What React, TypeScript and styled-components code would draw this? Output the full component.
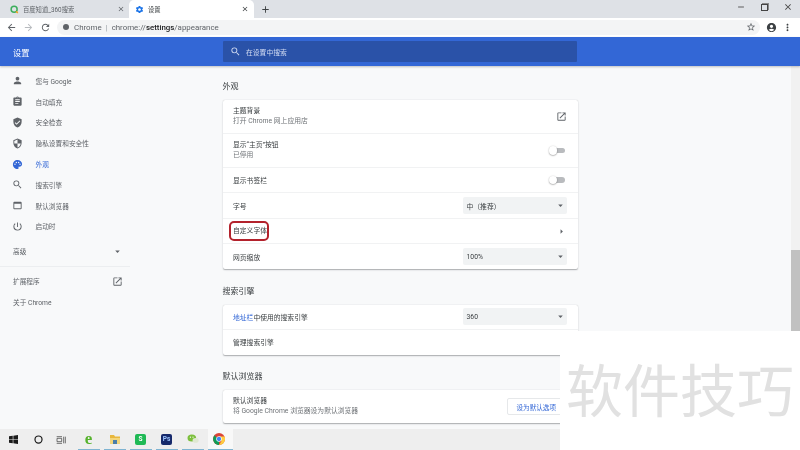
import styled, { createGlobalStyle } from 'styled-components';
import {
  MdArrowDropDown,
  MdAssignment,
  MdMoreVert,
  MdOpenInNew,
  MdPalette,
  MdPerson,
  MdPowerSettingsNew,
  MdSearch,
  MdSecurity,
  MdSettings,
  MdVerifiedUser,
  MdWebAsset,
  MdArrowBack,
  MdArrowForward,
  MdRefresh,
  MdStarBorder,
  MdAccountCircle,
  MdClose,
  MdAdd,
  MdRemove,
  MdArrowRight,
} from 'react-icons/md';

const GlobalStyle = createGlobalStyle`
  html, body {
    margin: 0;
    padding: 0;
    background: #fff;
  }
  body {
    font-family: Roboto, "Noto Sans CJK SC", sans-serif;
  }
`;

const Window = styled.div`
  position: relative;
  width: 800px;
  height: 450px;
  overflow: hidden;
  display: flex;
  flex-direction: column;
  background: #f8f9fa;
  filter: blur(0.35px);
`;

const TabStrip = styled.div`
  height: 18px;
  display: flex;
  align-items: stretch;
  background: #dee1e6;
  flex: none;
`;

const Tab = styled.div<{ $active?: boolean }>`
  width: 125px;
  display: flex;
  align-items: center;
  gap: 4px;
  padding: ${(p) => (p.$active ? '0 5px 0 6px' : '0 0 0 10px')};
  box-sizing: border-box;
  font-size: 6.3px;
  color: ${(p) => (p.$active ? '#3c4043' : '#5f6368')};
  background: ${(p) => (p.$active ? '#fff' : 'transparent')};
  border-radius: 5px 5px 0 0;
  margin-left: ${(p) => (p.$active ? '4px' : '0')};
`;

const TabTitle = styled.span`
  flex: 1;
  white-space: nowrap;
`;

const NewTab = styled.div`
  display: flex;
  align-items: center;
  margin-left: 6px;
  color: #3c4043;
  font-size: 11px;
`;

const WindowControls = styled.div`
  margin-left: auto;
  display: flex;
  align-items: center;
  gap: 14px;
  padding: 0 7px 4px 0;
  color: #444;
  font-size: 10px;
`;

const MaxIcon = styled.span`
  width: 5px;
  height: 5px;
  border: 1px solid #444;
  box-sizing: content-box;
  margin: 0 1px;
  box-shadow: 1px -1px 0 0 #888;
`;

const Toolbar = styled.div`
  height: 19px;
  flex: none;
  display: flex;
  align-items: center;
  background: #fff;
  padding: 0 6px 1px 6px;
  box-sizing: border-box;
  color: #5f6368;
  font-size: 11px;
`;

const NavIcons = styled.div`
  display: flex;
  gap: 6px;
  align-items: center;
  width: 51px;
  flex: none;
`;

const Omnibox = styled.div`
  width: 703px;
  height: 15px;
  flex: none;
  border-radius: 8px;
  background: #f3f4f5;
  display: flex;
  align-items: center;
  padding: 0 4px 0 6px;
  box-sizing: border-box;
  font-size: 7.9px;
  color: #5f6368;
  gap: 3px;
`;

const SecureDot = styled.span`
  width: 6px;
  height: 6px;
  border-radius: 50%;
  background: #5f6368;
  margin-right: 2px;
`;

const Pipe = styled.span`
  color: #9aa0a6;
  margin: 0 1px;
`;

const UrlHost = styled.b`
  color: #202124;
  font-weight: 500;
`;

const Url = styled.span`
  white-space: nowrap;
`;

const StarSlot = styled.span`
  margin-left: auto;
  display: flex;
  color: #5f6368;
  font-size: 10px;
`;

const ProfileIcons = styled.div`
  display: flex;
  align-items: center;
  gap: 5px;
  margin-left: 6px;
  color: #3c4043;
  font-size: 11px;
`;

const HeaderBar = styled.div`
  height: 29px;
  flex: none;
  display: flex;
  align-items: center;
  background: #3367d6;
  box-shadow: 0 1px 2px rgba(60, 64, 67, 0.3);
  color: #fff;
  z-index: 1;
`;

const HeaderTitle = styled.div`
  width: 223px;
  padding-left: 13px;
  box-sizing: border-box;
  font-size: 8.2px;
  flex: none;
`;

const SearchBox = styled.div`
  width: 354px;
  height: 21px;
  background: #2a52a8;
  border-radius: 1px;
  display: flex;
  align-items: center;
  padding-left: 7px;
  box-sizing: border-box;
  gap: 5px;
  font-size: 6.8px;
  color: #d2dcf2;
`;

const Body = styled.div`
  flex: 1;
  min-height: 0;
  display: flex;
  overflow: hidden;
`;

const Sidebar = styled.nav`
  width: 222.5px;
  flex: none;
  padding-top: 4.5px;
  box-sizing: border-box;
`;

const NavItem = styled.div<{ $active?: boolean }>`
  height: 20.8px;
  display: flex;
  align-items: center;
  padding-left: 12px;
  gap: 12.5px;
  font-size: 6.7px;
  color: ${(p) => (p.$active ? '#3367d6' : '#5f6368')};
  svg {
    font-size: 11px;
    color: ${(p) => (p.$active ? '#3367d6' : '#5f6368')};
  }
`;

const NavPlain = styled.div`
  width: 130px;
  height: 21px;
  display: flex;
  align-items: center;
  justify-content: space-between;
  padding: 0 7px 0 13px;
  box-sizing: border-box;
  font-size: 6.7px;
  color: #5f6368;
  svg {
    font-size: 11px;
  }
`;

const NavAdvanced = styled(NavPlain)`
  margin-top: 5px;
  height: 25px;
  border-bottom: 1px solid #eceef0;
  padding-bottom: 5px;
  margin-bottom: 4px;
`;

const Main = styled.main`
  width: 355px;
  flex: none;
  padding-top: 14px;
  box-sizing: border-box;
`;

const Section = styled.section`
  & + & {
    margin-top: 15.5px;
  }
`;

const SectionTitle = styled.h2`
  margin: 0 0 6px;
  height: 14px;
  line-height: 14px;
  font-size: 8px;
  font-weight: 400;
  color: #3c4043;
`;

const Card = styled.div`
  background: #fff;
  border-radius: 2px;
  box-shadow: 0 0.5px 1px rgba(60, 64, 67, 0.3), 0 1px 2px rgba(60, 64, 67, 0.15);
`;

const Row = styled.div<{ $height: number; $last?: boolean }>`
  height: ${(p) => p.$height}px;
  display: flex;
  align-items: center;
  justify-content: space-between;
  padding: 0 11px 0 10.5px;
  box-sizing: border-box;
  border-bottom: ${(p) => (p.$last ? 'none' : '1px solid #f1f2f3')};
  font-size: 6.8px;
  color: #3c4043;
`;

const RowText = styled.div`
  display: flex;
  flex-direction: column;
  gap: 1.5px;
  line-height: 9px;
`;

const SubText = styled.span`
  color: #6f7377;
`;

const LinkText = styled.span`
  color: #3367d6;
`;

const Circled = styled.span`
  display: inline-block;
  line-height: 10px;
  padding: 3px 0 3px 2px;
  margin-left: -4px;
  border: 2px solid #b3222c;
  border-radius: 5px;
`;

const Select = styled.div`
  width: 104px;
  height: 17px;
  display: flex;
  align-items: center;
  justify-content: space-between;
  padding: 0 1px 0 4px;
  box-sizing: border-box;
  background: #f1f3f4;
  border-radius: 2px;
  color: #3c4043;
  font-size: 6.8px;
  svg {
    font-size: 11px;
    color: #5f6368;
  }
`;

const Toggle = styled.div`
  position: relative;
  width: 14px;
  height: 5.5px;
  margin-right: 2px;
  border-radius: 3px;
  background: #b9bbbe;
  &::before {
    content: '';
    position: absolute;
    left: -2px;
    top: -1.5px;
    width: 8.5px;
    height: 8.5px;
    border-radius: 50%;
    background: #fff;
    box-shadow: 0 0.5px 1.5px rgba(0, 0, 0, 0.45);
  }
`;

const RowIcon = styled.span`
  display: flex;
  color: #5f6368;
  font-size: 11px;
`;

const OutlineButton = styled.div`
  width: 70px;
  height: 17px;
  display: flex;
  align-items: center;
  padding-left: 9px;
  box-sizing: border-box;
  border: 1px solid #e6e8ea;
  border-radius: 2px;
  color: #3367d6;
  font-size: 6.6px;
  white-space: nowrap;
  margin-right: -10px;
`;

const Scrollbar = styled.div`
  margin-left: auto;
  width: 9px;
  flex: none;
  display: flex;
  flex-direction: column;
  background: #f1f1f1;
  padding-top: 184px;
  box-sizing: border-box;
`;

const ScrollThumb = styled.div`
  flex: 1;
  background: #c1c1c1;
`;

const Taskbar = styled.div`
  height: 21px;
  flex: none;
  display: flex;
  align-items: center;
  background: #eeeeee;
`;

const TaskStart = styled.div`
  width: 26px;
  display: flex;
  justify-content: center;
`;

const TaskCircle = styled.div`
  width: 24px;
  display: flex;
  justify-content: center;
`;

const TaskView = styled.div`
  width: 22px;
  margin-right: 6px;
  display: flex;
  justify-content: center;
`;

const TaskApp = styled.div<{ $open?: boolean }>`
  width: ${(p) => (p.$open ? '25px' : '22px')};
  height: 21px;
  margin-right: 4px;
  padding-right: ${(p) => (p.$open ? '4px' : '1px')};
  display: flex;
  align-items: center;
  justify-content: center;
  box-sizing: border-box;
  border-bottom: 1.5px solid #7fb4d2;
  background: ${(p) => (p.$open ? '#f8f8f8' : 'transparent')};
`;

const AppBadge = styled.span<{ $bg: string; $fg: string }>`
  width: 11px;
  height: 11px;
  border-radius: 2px;
  display: flex;
  align-items: center;
  justify-content: center;
  background: ${(p) => p.$bg};
  color: ${(p) => p.$fg};
  font-size: 6.5px;
  font-weight: 700;
`;

const IeGlyph = styled.span`
  color: #55b22c;
  font-size: 17px;
  line-height: 14px;
  font-weight: 700;
  font-family: "Liberation Serif", serif;
`;

const Watermark = styled.div`
  position: absolute;
  left: 560px;
  top: 331px;
  width: 240px;
  height: 119px;
  background: #fff;
  display: flex;
  align-items: center;
  justify-content: center;
  padding-bottom: 7px;
  box-sizing: border-box;
  font-size: 57px;
  font-weight: 400;
  color: #e1e1e1;
  white-space: nowrap;
`;

function ChromeLogo({ size }: { size: number }) {
  return (
    <svg width={size} height={size} viewBox="0 0 24 24">
      <circle cx="12" cy="12" r="12" fill="#db4437" />
      <path d="M12 24A12 12 0 0 1 3 4.5L7 9l5 3Z" fill="#0f9d58" />
      <path d="M12 24A12 12 0 0 0 23 7H12l5 9Z" fill="#ffcd40" />
      <circle cx="12" cy="12" r="5.5" fill="#fff" />
      <circle cx="12" cy="12" r="4.3" fill="#4285f4" />
    </svg>
  );
}

function SearchFavicon() {
  return (
    <svg width="9" height="9" viewBox="0 0 12 12" fill="none">
      <circle cx="5.5" cy="5.5" r="4" stroke="#3cae5c" strokeWidth="2" />
      <path d="M8 8.5 10.5 10.5" stroke="#f0a020" strokeWidth="2" />
    </svg>
  );
}

export default function App() {
  return (
    <>
      <GlobalStyle />
      <Window>
        <TabStrip>
          <Tab>
            <SearchFavicon />
            <TabTitle>百度知道_360搜索</TabTitle>
            <MdClose size={8} />
          </Tab>
          <Tab $active>
            <MdSettings size={9} color="#1a73e8" />
            <TabTitle>设置</TabTitle>
            <MdClose size={8} />
          </Tab>
          <NewTab>
            <MdAdd />
          </NewTab>
          <WindowControls>
            <MdRemove />
            <MaxIcon />
            <MdClose />
          </WindowControls>
        </TabStrip>

        <Toolbar>
          <NavIcons>
            <MdArrowBack />
            <MdArrowForward color="#b8bbbf" />
            <MdRefresh />
          </NavIcons>
          <Omnibox>
            <SecureDot />
            Chrome
            <Pipe>|</Pipe>
            <Url>
              chrome://<UrlHost>settings</UrlHost>/appearance
            </Url>
            <StarSlot>
              <MdStarBorder />
            </StarSlot>
          </Omnibox>
          <ProfileIcons>
            <MdAccountCircle />
            <MdMoreVert />
          </ProfileIcons>
        </Toolbar>

        <HeaderBar>
          <HeaderTitle>设置</HeaderTitle>
          <SearchBox>
            <MdSearch size={11} />
            在设置中搜索
          </SearchBox>
        </HeaderBar>

        <Body>
          <Sidebar>
            <NavItem><MdPerson />您与 Google</NavItem>
            <NavItem><MdAssignment />自动填充</NavItem>
            <NavItem><MdVerifiedUser />安全检查</NavItem>
            <NavItem><MdSecurity />隐私设置和安全性</NavItem>
            <NavItem $active><MdPalette />外观</NavItem>
            <NavItem><MdSearch />搜索引擎</NavItem>
            <NavItem><MdWebAsset />默认浏览器</NavItem>
            <NavItem><MdPowerSettingsNew />启动时</NavItem>
            <NavAdvanced>高级<MdArrowDropDown /></NavAdvanced>
            <NavPlain>扩展程序<MdOpenInNew /></NavPlain>
            <NavPlain>关于 Chrome</NavPlain>
          </Sidebar>

          <Main>
            <Section>
              <SectionTitle>外观</SectionTitle>
              <Card>
                <Row $height={34}>
                  <RowText>
                    主题背景
                    <SubText>打开 Chrome 网上应用店</SubText>
                  </RowText>
                  <RowIcon><MdOpenInNew /></RowIcon>
                </Row>
                <Row $height={34}>
                  <RowText>
                    显示“主页”按钮
                    <SubText>已停用</SubText>
                  </RowText>
                  <Toggle />
                </Row>
                <Row $height={25}>
                  显示书签栏
                  <Toggle />
                </Row>
                <Row $height={26}>
                  字号
                  <Select>中（推荐）<MdArrowDropDown /></Select>
                </Row>
                <Row $height={25}>
                  <Circled>自定义字体</Circled>
                  <RowIcon><MdArrowRight /></RowIcon>
                </Row>
                <Row $height={25} $last>
                  网页缩放
                  <Select>100%<MdArrowDropDown /></Select>
                </Row>
              </Card>
            </Section>

            <Section>
              <SectionTitle>搜索引擎</SectionTitle>
              <Card>
                <Row $height={25}>
                  <span><LinkText>地址栏</LinkText>中使用的搜索引擎</span>
                  <Select>360<MdArrowDropDown /></Select>
                </Row>
                <Row $height={25} $last>管理搜索引擎</Row>
              </Card>
            </Section>

            <Section>
              <SectionTitle>默认浏览器</SectionTitle>
              <Card>
                <Row $height={33} $last>
                  <RowText>
                    默认浏览器
                    <SubText>将 Google Chrome 浏览器设为默认浏览器</SubText>
                  </RowText>
                  <OutlineButton>设为默认选项</OutlineButton>
                </Row>
              </Card>
            </Section>
          </Main>

          <Scrollbar>
            <ScrollThumb />
          </Scrollbar>
        </Body>

        <Taskbar>
          <TaskStart>
            <svg width="9" height="9" viewBox="0 0 12 12" fill="#1a1a1a">
              <path d="M0 1.7 5 1v4.7H0ZM5.8.9 12 0v5.7H5.8ZM0 6.4h5V11l-5-.7ZM5.8 6.4H12V12l-6.2-.9Z" />
            </svg>
          </TaskStart>
          <TaskCircle>
            <svg width="9" height="9" viewBox="0 0 12 12" fill="none">
              <circle cx="6" cy="6" r="4.7" stroke="#1a1a1a" strokeWidth="1.6" />
            </svg>
          </TaskCircle>
          <TaskView>
            <svg width="10" height="8" viewBox="0 0 14 12" fill="none" stroke="#333" strokeWidth="1">
              <path d="M.5 1h8M.5 11h8M1 3.5h7v5H1ZM11 1v10M13.5 1v10" />
            </svg>
          </TaskView>
          <TaskApp><IeGlyph>e</IeGlyph></TaskApp>
          <TaskApp>
            <svg width="12" height="12" viewBox="0 0 12 12">
              <path d="M1 2h4l1 1.5h5V5H1Z" fill="#e8b73c" />
              <path d="M1 5h10v6H1Z" fill="#f3d57a" />
              <path d="M4 7h4v4H4Z" fill="#4a7ea8" />
            </svg>
          </TaskApp>
          <TaskApp><AppBadge $bg="#1fb955" $fg="#fff">S</AppBadge></TaskApp>
          <TaskApp><AppBadge $bg="#16296b" $fg="#9cc4ff">Ps</AppBadge></TaskApp>
          <TaskApp>
            <svg width="12" height="12" viewBox="0 0 12 12">
              <ellipse cx="4.8" cy="5" rx="4.3" ry="3.6" fill="#7cbf3c" />
              <ellipse cx="8.6" cy="7.4" rx="3" ry="2.4" fill="#dfe8d2" />
              <circle cx="3.4" cy="4.2" r="0.6" fill="#fff" />
              <circle cx="6" cy="4.2" r="0.6" fill="#fff" />
            </svg>
          </TaskApp>
          <TaskApp $open><ChromeLogo size={12} /></TaskApp>
        </Taskbar>

        <Watermark>软件技巧</Watermark>
      </Window>
    </>
  );
}
